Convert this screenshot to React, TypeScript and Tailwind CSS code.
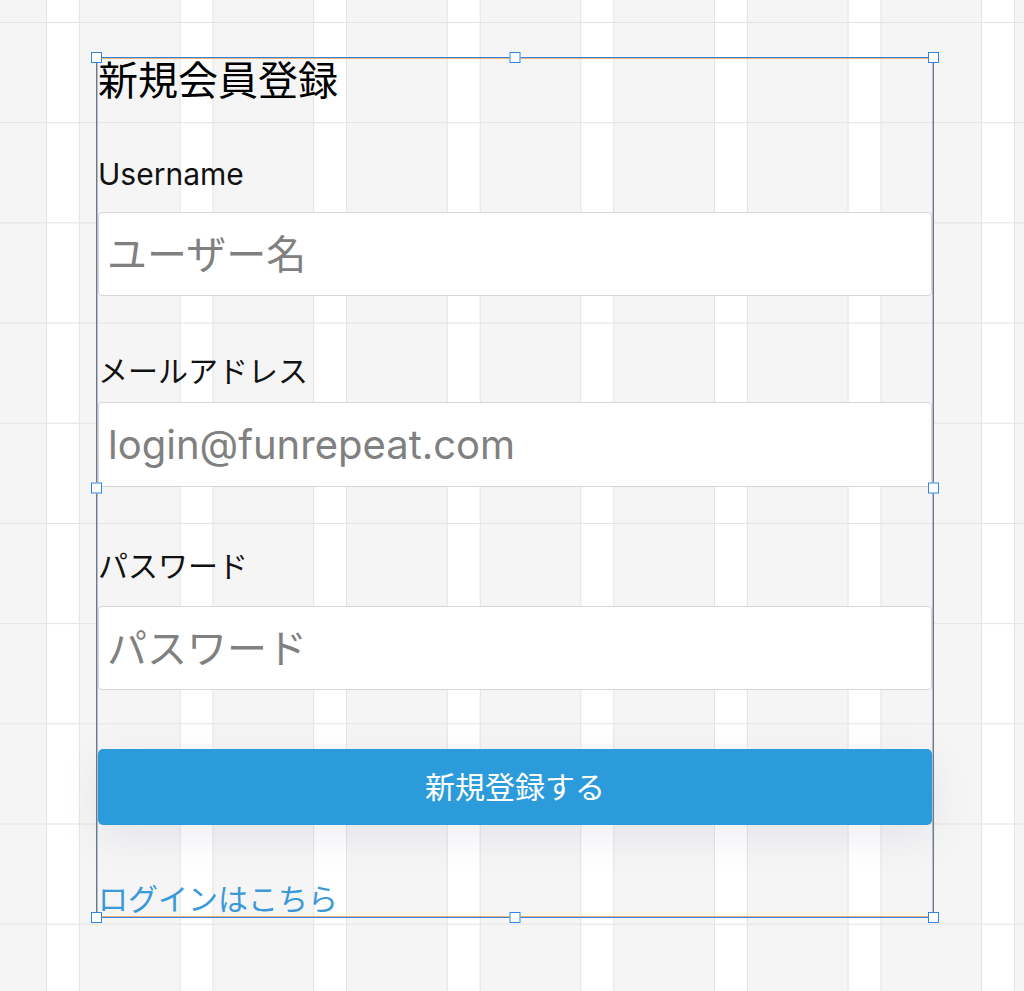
import React from "react";

function Handle({ className }: { className: string }) {
  return (
    <div
      className={
        "absolute h-[11px] w-[11px] border border-[#2f86e8] bg-white " + className
      }
    />
  );
}

const inputCls =
  "w-full rounded-[4px] border border-[#d6d6d6] bg-white text-[40px] outline-none placeholder:text-[#808080]";

export default function App() {
  return (
    <div className="min-h-screen w-full bg-[#f5f5f5] bg-[linear-gradient(to_bottom,#e3e3e3_0_1px,transparent_1px_100%),linear-gradient(to_right,#e3e3e3_0_1px,#ffffff_1px_33px,#e3e3e3_33px_34px,transparent_34px_100%)] bg-[length:100%_100.2px,133.6px_100%] bg-[position:0_22px,46px_0] pl-[97px] pt-[58px] font-['Inter','Noto_Sans_CJK_JP',sans-serif] text-[#111]">
      <div className="relative w-[836px] border border-[#f2b06a]">
        <form className="flex flex-col gap-[57px]">
          <h1 className="-mb-[4px] text-[40px] font-normal leading-[44px] text-black">新規会員登録</h1>

          <div className="flex flex-col gap-[20px]">
            <label className="text-[30px] leading-[36px]">Username</label>
            <input className={inputCls + " h-[84px] px-[8px]"} placeholder="ユーザー名" />
          </div>

          <div className="flex flex-col gap-[13px]">
            <label className="text-[30px] leading-[36px]">メールアドレス</label>
            <input className={inputCls + " h-[85px] px-[9px]"} placeholder="login@funrepeat.com" />
          </div>

          <div className="mt-[4px] flex flex-col gap-[22px]">
            <label className="text-[30px] leading-[36px]">パスワード</label>
            <input className={inputCls + " h-[84px] px-[8px]"} placeholder="パスワード" />
          </div>

          <button
            type="button"
            className="mt-[2px] h-[76px] w-full rounded-[5px] bg-[#2c9bdc] text-[30px] text-white shadow-[0_12px_40px_rgba(90,90,160,0.10)]"
          >
            新規登録する
          </button>

          <a className="self-start text-[30px] leading-[34px] text-[#3a99d8]" href="#">
            ログインはこちら
          </a>
        </form>

        <div className="pointer-events-none absolute -inset-[2px] border border-[#2f86e8]" />

        <Handle className="left-[-7px] top-[-7px]" />
        <Handle className="left-1/2 top-[-7px] -translate-x-1/2" />
        <Handle className="right-[-7px] top-[-7px]" />
        <Handle className="left-[-7px] top-1/2 -translate-y-1/2" />
        <Handle className="right-[-7px] top-1/2 -translate-y-1/2" />
        <Handle className="bottom-[-7px] left-[-7px]" />
        <Handle className="bottom-[-7px] left-1/2 -translate-x-1/2" />
        <Handle className="bottom-[-7px] right-[-7px]" />
      </div>
    </div>
  );
}
